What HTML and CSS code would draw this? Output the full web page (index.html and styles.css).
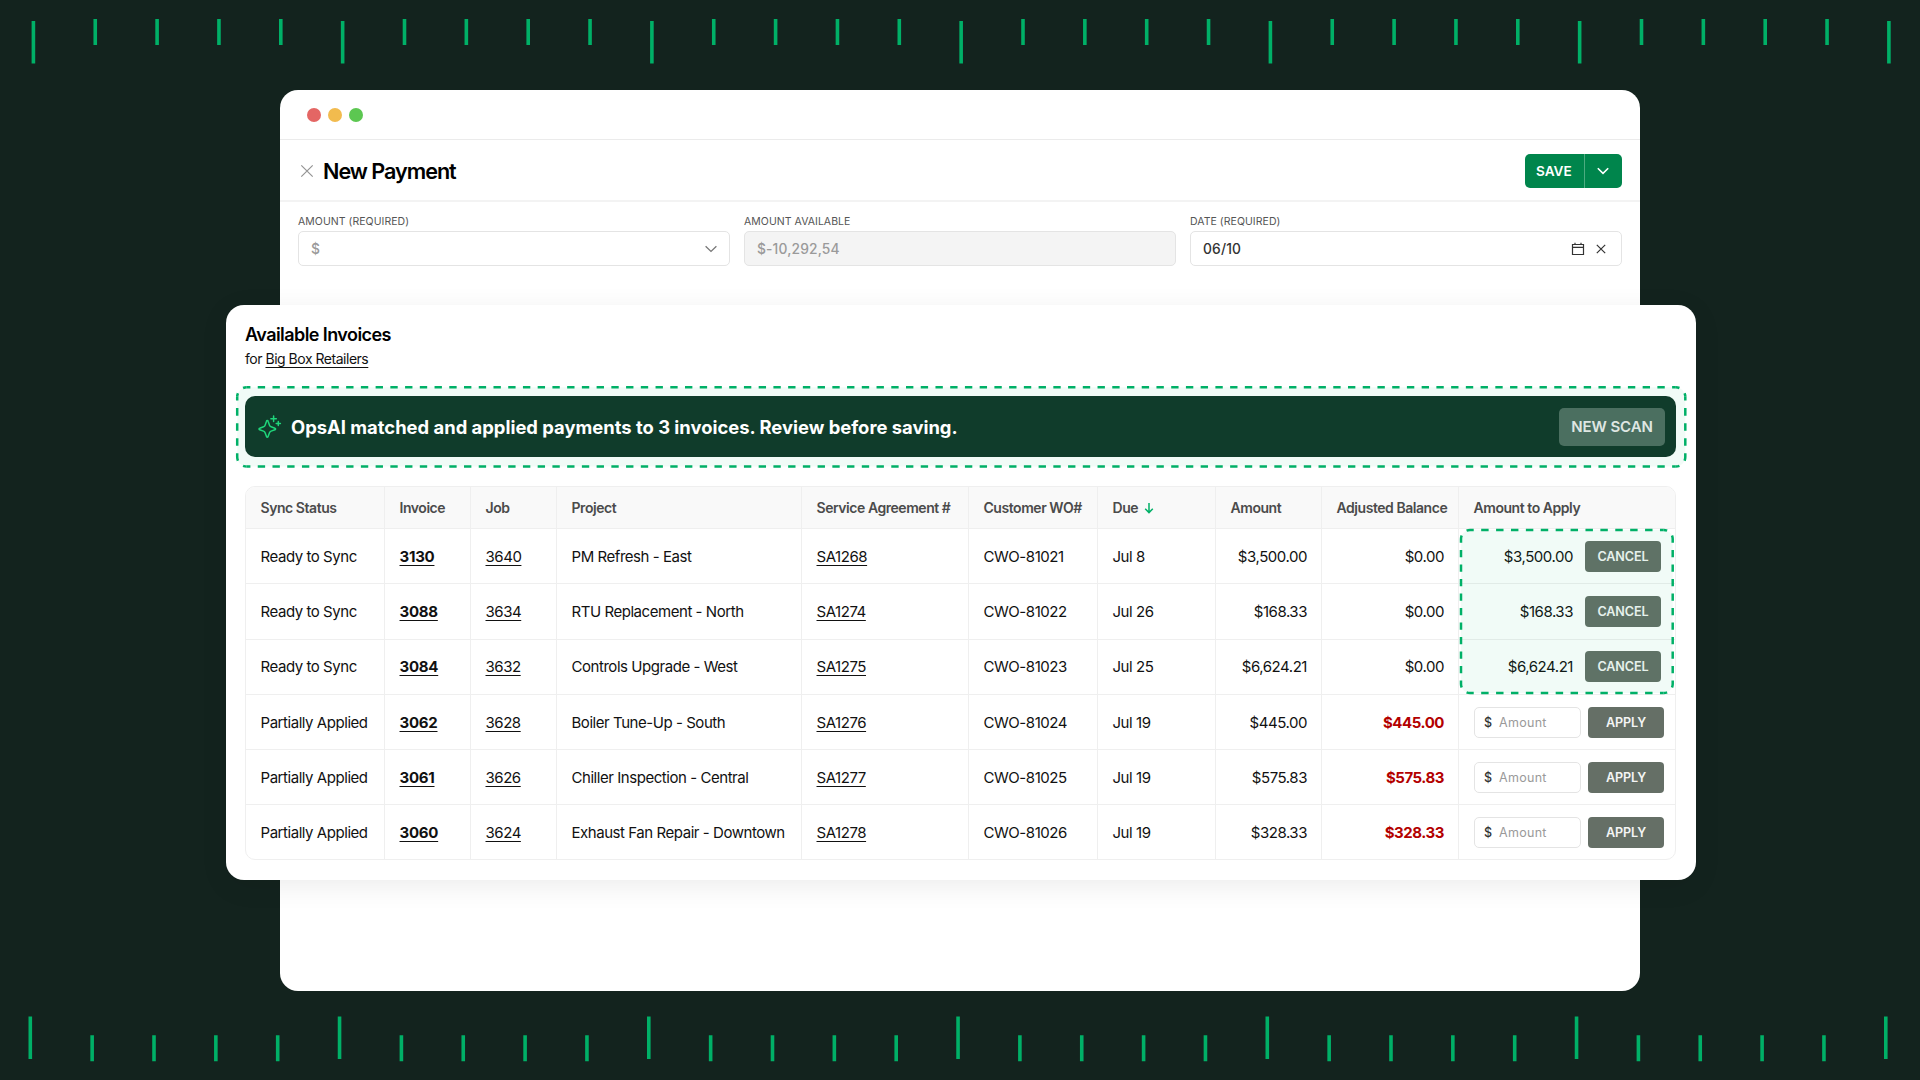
FILE: index.html
```
<!DOCTYPE html>
<html lang="en">
<head>
  <meta charset="UTF-8">
  <meta name="viewport" content="width=device-width, initial-scale=1.0">
  <title>New Payment</title>
  <link rel="stylesheet" href="styles.css">
</head>
<body>
  <!-- top ruler -->
  <svg class="ruler ruler-top" width="1920" height="90" viewBox="0 0 1920 90">
    <path class="tick-long" d="M31.6 42.2H1900" />
    <path class="tick-short" d="M31.6 32H1900" />
  </svg>

  <main class="stage">
    <!-- browser window -->
    <section class="window">
      <div class="window-bar">
        <span class="dot red"></span>
        <span class="dot yellow"></span>
        <span class="dot green"></span>
      </div>
      <header class="page-header">
        <svg class="close-icon" width="14" height="14" viewBox="0 0 14 14"><path d="M1.3 1.3l11.4 11.4M12.7 1.3L1.3 12.7" /></svg>
        <h1>New Payment</h1>
        <div class="save-group">
          <span class="save-label">SAVE</span>
          <span class="save-more">
            <svg width="14" height="8" viewBox="0 0 14 8"><path d="M1.8 1.2L7 6.4l5.2-5.2" /></svg>
          </span>
        </div>
      </header>
      <div class="fields">
        <div class="field">
          <label>AMOUNT (REQUIRED)</label>
          <div class="input muted">
            <span>$</span>
            <svg class="chevron" width="14" height="8" viewBox="0 0 14 8"><path d="M1.6 1.2L7 6.4l5.4-5.2" /></svg>
          </div>
        </div>
        <div class="field">
          <label>AMOUNT AVAILABLE</label>
          <div class="input muted disabled"><span>$-10,292,54</span></div>
        </div>
        <div class="field">
          <label>DATE (REQUIRED)</label>
          <div class="input">
            <span>06/10</span>
            <div class="input-icons">
              <svg width="14" height="14" viewBox="0 0 14 14"><path d="M1.5 2.5h11v10h-11zM1.5 5.4h11M4 .8v2M10 .8v2" /></svg>
              <svg width="10" height="10" viewBox="0 0 10 10"><path d="M.8.8l8.4 8.4M9.2.8L.8 9.2" /></svg>
            </div>
          </div>
        </div>
      </div>
    </section>

    <!-- invoices panel -->
    <section class="panel">
      <h2>Available Invoices</h2>
      <p class="customer">for <a>Big Box Retailers</a></p>

      <div class="banner">
        <svg class="outline banner-outline" width="1453" height="84" viewBox="0 0 1453 84">
          <rect x="2.2" y="2.3" width="1448.1" height="79.3" rx="9.5" />
          <path pathLength="194" d="M11.7 2.3H1440.8M11.7 81.6H1440.8" />
          <path pathLength="8" d="M2.2 11.8V72.1M1450.3 11.8V72.1" />
          <path pathLength="4" d="M2.2 11.8A9.5 9.5 0 0 1 11.7 2.3M1440.8 2.3A9.5 9.5 0 0 1 1450.3 11.8M1450.3 72.1A9.5 9.5 0 0 1 1440.8 81.6M11.7 81.6A9.5 9.5 0 0 1 2.2 72.1" />
        </svg>
        <div class="banner-body">
          <svg class="sparkle" width="26" height="26" viewBox="0 0 26 26">
            <path d="M11.3 6.6c.4 0 .7.3.8.7l1.4 3.9c.3.8.8 1.3 1.6 1.6l3.8 1.4c.9.3.9 1.2 0 1.5l-3.8 1.4c-.8.3-1.3.8-1.6 1.6l-1.4 3.9c-.3.9-1.3.9-1.6 0l-1.4-3.9c-.3-.8-.8-1.3-1.6-1.6l-3.8-1.4c-.9-.3-.9-1.2 0-1.5l3.8-1.4c.8-.3 1.3-.8 1.6-1.6l1.4-3.9c.1-.4.4-.7.8-.7z" />
            <path d="M17.6 2v5.4M14.9 4.7h5.4M22.3 7.4v4.2M20.2 9.5h4.2" />
          </svg>
          <span class="banner-text">OpsAI matched and applied payments to 3 invoices. Review before saving.</span>
          <span class="scan-btn">NEW SCAN</span>
        </div>
      </div>

      <div class="table">
        <svg class="outline table-outline" width="216" height="167" viewBox="0 0 216 167">
          <rect x="2" y="2" width="211.7" height="163" rx="9" />
          <path pathLength="26" d="M11 2H204.7M11 165H204.7" />
          <path pathLength="20" d="M2 11V156M213.7 11V156" />
          <path pathLength="4" d="M2 11A9 9 0 0 1 11 2M204.7 2A9 9 0 0 1 213.7 11M213.7 156A9 9 0 0 1 204.7 165M11 165A9 9 0 0 1 2 156" />
        </svg>
        <div class="row head">
          <div>Sync Status</div>
          <div>Invoice</div>
          <div>Job</div>
          <div>Project</div>
          <div>Service Agreement #</div>
          <div>Customer WO#</div>
          <div>Due <svg class="sort" width="10" height="12" viewBox="0 0 10 12"><path d="M5 1v9.4M1.2 6.8L5 10.6l3.8-3.8" /></svg></div>
          <div>Amount</div>
          <div>Adjusted Balance</div>
          <div>Amount to Apply</div>
        </div>
        <div class="row">
          <div>Ready to Sync</div>
          <div><a class="strong">3130</a></div>
          <div><a>3640</a></div>
          <div>PM Refresh - East</div>
          <div><a>SA1268</a></div>
          <div>CWO-81021</div>
          <div>Jul 8</div>
          <div class="num">$3,500.00</div>
          <div class="num">$0.00</div>
          <div class="applied">$3,500.00 <span class="btn">CANCEL</span></div>
        </div>
        <div class="row">
          <div>Ready to Sync</div>
          <div><a class="strong">3088</a></div>
          <div><a>3634</a></div>
          <div>RTU Replacement - North</div>
          <div><a>SA1274</a></div>
          <div>CWO-81022</div>
          <div>Jul 26</div>
          <div class="num">$168.33</div>
          <div class="num">$0.00</div>
          <div class="applied">$168.33 <span class="btn">CANCEL</span></div>
        </div>
        <div class="row">
          <div>Ready to Sync</div>
          <div><a class="strong">3084</a></div>
          <div><a>3632</a></div>
          <div>Controls Upgrade - West</div>
          <div><a>SA1275</a></div>
          <div>CWO-81023</div>
          <div>Jul 25</div>
          <div class="num">$6,624.21</div>
          <div class="num">$0.00</div>
          <div class="applied">$6,624.21 <span class="btn">CANCEL</span></div>
        </div>
        <div class="row">
          <div>Partially Applied</div>
          <div><a class="strong">3062</a></div>
          <div><a>3628</a></div>
          <div>Boiler Tune-Up - South</div>
          <div><a>SA1276</a></div>
          <div>CWO-81024</div>
          <div>Jul 19</div>
          <div class="num">$445.00</div>
          <div class="num due">$445.00</div>
          <div class="apply"><span class="amount"><b>$</b>Amount</span><span class="btn">APPLY</span></div>
        </div>
        <div class="row">
          <div>Partially Applied</div>
          <div><a class="strong">3061</a></div>
          <div><a>3626</a></div>
          <div>Chiller Inspection - Central</div>
          <div><a>SA1277</a></div>
          <div>CWO-81025</div>
          <div>Jul 19</div>
          <div class="num">$575.83</div>
          <div class="num due">$575.83</div>
          <div class="apply"><span class="amount"><b>$</b>Amount</span><span class="btn">APPLY</span></div>
        </div>
        <div class="row">
          <div>Partially Applied</div>
          <div><a class="strong">3060</a></div>
          <div><a>3624</a></div>
          <div>Exhaust Fan Repair - Downtown</div>
          <div><a>SA1278</a></div>
          <div>CWO-81026</div>
          <div>Jul 19</div>
          <div class="num">$328.33</div>
          <div class="num due">$328.33</div>
          <div class="apply"><span class="amount"><b>$</b>Amount</span><span class="btn">APPLY</span></div>
        </div>
      </div>
    </section>
  </main>

  <!-- bottom ruler -->
  <svg class="ruler ruler-bottom" width="1920" height="89" viewBox="0 0 1920 89">
    <path class="tick-long" d="M28.5 46.8H1900" />
    <path class="tick-short" d="M28.5 57.2H1900" />
  </svg>
</body>
</html>
```
FILE: styles.css
```
* {
  box-sizing: border-box;
}

body {
  margin: 0;
  width: 1920px;
  height: 1080px;
  overflow: hidden;
  display: flex;
  flex-direction: column;
  background: #13231e;
  font-family: Inter, "Liberation Sans", sans-serif;
  color: #111;
}

svg {
  display: block;
  flex: none;
  fill: none;
}

h1, h2, p {
  margin: 0;
}

/* rulers: every fifth tick is long */
.ruler path {
  stroke: #00b067;
}

.tick-long {
  stroke-width: 42.6;
  stroke-dasharray: 3.6 305.65;
}

.tick-short {
  stroke-width: 26;
  stroke-dasharray: 0 61.85 3.6 58.25 3.6 58.25 3.6 58.25 3.6 58.25;
}

/* window and panel share one grid cell */
.stage {
  display: grid;
  height: 901px;
}

.window,
.panel {
  grid-area: 1 / 1;
  background: #fff;
  border-radius: 18px;
}

.window {
  width: 1360px;
  margin-left: 280px;
}

.window-bar {
  display: flex;
  align-items: center;
  gap: 7px;
  height: 50px;
  padding-left: 27px;
  border-bottom: 1px solid #ebebeb;
}

.dot {
  width: 14px;
  height: 14px;
  border-radius: 50%;
}

.red {
  background: #e46664;
}

.yellow {
  background: #f2bb4e;
}

.green {
  background: #5cc751;
}

.page-header {
  display: flex;
  align-items: center;
  height: 62px;
  padding: 1px 18px 0 20px;
  border-bottom: 2px solid #f3f3f3;
}

.close-icon {
  stroke: #949494;
  stroke-width: 1.2;
}

.page-header h1 {
  margin-left: 9px;
  font-size: 21.6px;
  font-weight: 600;
  letter-spacing: -1.02px;
  color: #000;
}

.save-group {
  display: flex;
  height: 34px;
  margin-left: auto;
  border-radius: 5px;
  background: #00854c;
}

.save-label {
  width: 60px;
  padding-left: 11px;
  border-right: 1px solid #4dab80;
  color: #fff;
  font-size: 13.6px;
  font-weight: 600;
  line-height: 34px;
}

.save-more {
  display: flex;
  align-items: center;
  justify-content: center;
  width: 37px;
  padding-right: 2px;
}

.save-more svg {
  stroke: #fff;
  stroke-width: 1.6;
}

.fields {
  display: flex;
  gap: 14px;
  padding: 12px 18px;
}

.field {
  flex: 1;
}

.field label {
  display: block;
  height: 17px;
  font-size: 10.5px;
  line-height: 16px;
  letter-spacing: 0.05px;
  color: #555;
}

.input {
  display: flex;
  align-items: center;
  justify-content: space-between;
  height: 35px;
  padding: 0 11px 0 12px;
  border: 1px solid #e4e4e4;
  border-radius: 5px;
  font-size: 13.8px;
  font-weight: 500;
  letter-spacing: 0.15px;
  color: #333;
}

.muted {
  color: #9a9a9a;
}

.disabled {
  background: #f4f4f4;
}

.chevron {
  stroke: #777;
  stroke-width: 1.3;
}

.input-icons {
  display: flex;
  align-items: center;
  gap: 11px;
  margin-right: 4px;
  stroke: #333;
  stroke-width: 1.2;
}

/* invoices panel */
.panel {
  width: 1470px;
  height: 575px;
  margin: 215px 0 0 226px;
  padding: 18px 20px 0 19px;
  box-shadow: 0 6px 28px rgba(0, 0, 0, 0.08);
}

.panel h2 {
  font-size: 18px;
  font-weight: 600;
  line-height: 24px;
  letter-spacing: -0.57px;
  color: #000;
}

.customer {
  margin-top: 2px;
  font-size: 14px;
  line-height: 20px;
  letter-spacing: -0.48px;
}

a {
  text-decoration: underline;
  text-decoration-thickness: 1px;
  text-decoration-skip-ink: none;
  text-underline-offset: 3px;
}

.outline {
  position: absolute;
}

.outline rect {
  fill: rgba(0, 176, 103, 0.055);
}

/* one unit of pathLength is one dash and one gap */
.outline path {
  stroke: #00b067;
  stroke-width: 2.5;
  stroke-dasharray: 0.5 0.5;
  stroke-dashoffset: 0.25;
}

.banner {
  position: relative;
  margin-top: 27px;
}

.banner-outline {
  left: -10px;
  top: -11px;
}

.banner-body {
  position: relative;
  display: flex;
  align-items: center;
  height: 61px;
  padding: 0 11px;
  border-radius: 10px;
  background: #103c2b;
}

.sparkle {
  stroke: #1fd67b;
  stroke-width: 1.5;
  stroke-linecap: round;
}

.banner-text {
  margin-left: 9px;
  font-size: 18.4px;
  font-weight: 700;
  color: #fff;
}

.scan-btn {
  width: 106px;
  height: 38px;
  margin-left: auto;
  border-radius: 5px;
  background: #4b6f60;
  color: #dfe6e2;
  font-size: 15px;
  font-weight: 600;
  line-height: 38px;
  letter-spacing: -0.1px;
  text-align: center;
}

.table {
  position: relative;
  display: grid;
  grid-template-rows: 42px repeat(5, 55.3px) 54px;
  margin-top: 29px;
  border: 1px solid #efefef;
  border-radius: 10px;
}

.table-outline {
  left: 1213px;
  top: 41px;
  z-index: 1;
}

.row {
  display: grid;
  grid-template-columns: 139px 86px 86px 245px 167px 129px 118px 106px 137px 216px;
  border-bottom: 1px solid #efefef;
  font-size: 15px;
  letter-spacing: -0.45px;
  white-space: nowrap;
}

.row:last-child {
  border-bottom: 0;
}

.row > div {
  display: flex;
  align-items: center;
  padding-left: 14.5px;
  border-right: 1px solid #efefef;
}

.row > div:last-child {
  border-right: 0;
}

.head {
  border-radius: 9px 9px 0 0;
  background: #f9f9f9;
  color: #4b4b4b;
  font-size: 14px;
  font-weight: 600;
}

.sort {
  margin-left: 6px;
  stroke: #00b067;
  stroke-width: 1.5;
}

.strong {
  font-weight: 700;
  letter-spacing: -0.25px;
}

.row .num {
  justify-content: flex-end;
  padding-right: 14px;
}

.due {
  color: #b30000;
  font-weight: 700;
}

.row .applied {
  justify-content: flex-end;
  gap: 12px;
  padding-right: 14px;
}

.row .apply {
  gap: 7px;
  padding-left: 15px;
}

.btn {
  width: 76px;
  height: 31px;
  border-radius: 4px;
  background: #656f66;
  color: #f4f5f4;
  font-size: 12.6px;
  font-weight: 600;
  line-height: 31px;
  letter-spacing: -0.1px;
  text-align: center;
}

.amount {
  width: 107px;
  height: 31px;
  padding-left: 9px;
  border: 1px solid #e4e4e4;
  border-radius: 5px;
  background: #fff;
  color: #9a9a9a;
  font-size: 12.5px;
  font-weight: 400;
  line-height: 30px;
  letter-spacing: 0.3px;
}

.amount b {
  display: inline-block;
  width: 15px;
  color: #333;
  font-weight: 500;
}
```
